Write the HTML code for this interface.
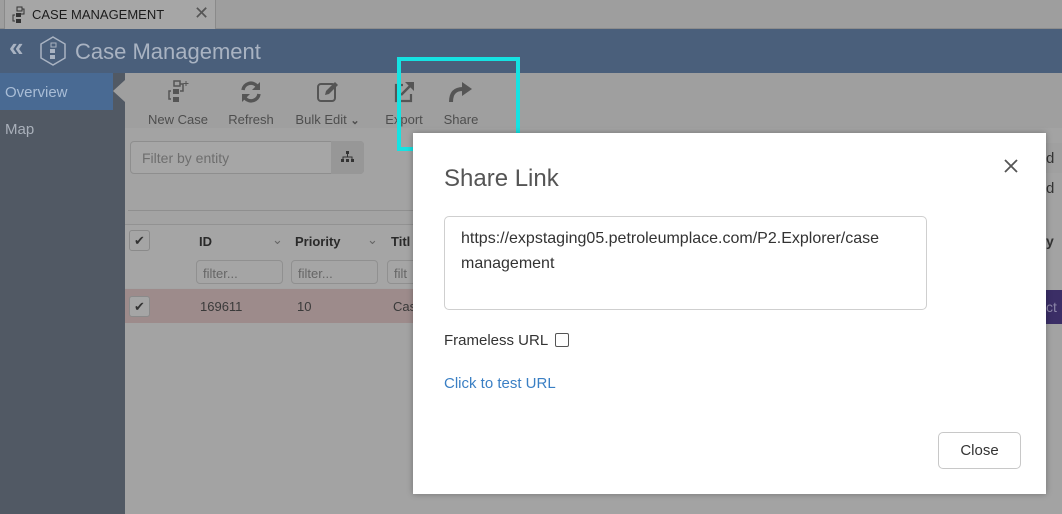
<!DOCTYPE html>
<html><head><meta charset="utf-8"><style>
*{box-sizing:border-box;margin:0;padding:0}
body{width:1062px;height:514px;overflow:hidden;position:relative;font-family:"Liberation Sans",sans-serif;background:#a4a4a4}
.abs{position:absolute}
.tabbar{left:0;top:0;width:1062px;height:29px;background:#9e9e9e;border-bottom:1px solid #8c8c8c}
.tab{left:4px;top:0;width:212px;height:29px;background:#a6a6a6;border-left:1px solid #8a8a8a;border-right:1px solid #8a8a8a;font-size:13px;color:#1c1c1c}
.header{left:0;top:29px;width:1062px;height:44px;background:#4a5f7b;color:#a9b3c2;font-size:22px}
.side{left:0;top:73px;width:125px;height:441px;background:#515964}
.ov{left:0;top:73px;width:113px;height:37px;background:#496a93;color:#a9bdd6;font-size:15px;padding:11px 0 0 5px}
.map{left:5px;top:121px;color:#a9b0ba;font-size:15px}
.tool{top:80px;color:#4e4e4e;font-size:13px;text-align:center}
.tool svg{display:block;margin:0 auto 8px}
.content{left:125px;top:128px;width:937px;height:386px;background:#a3a3a3}
.tb{left:125px;top:73px;width:937px;height:55px;background:#9f9f9f}
.grid{font-size:13px;color:#2a2a2a}
.modal{left:413px;top:133px;width:633px;height:361px;background:#fff;box-shadow:0 0 6px rgba(0,0,0,.3)}
</style></head><body>
<div class="abs tabbar"></div>
<div class="abs tab"><svg class="abs" style="left:7px;top:6px" width="14" height="18" viewBox="0 0 14 18"><rect x="5" y="1" width="5" height="4" fill="none" stroke="#333"/><rect x="4" y="7" width="5" height="4" fill="#333"/><rect x="4" y="13" width="5" height="4" fill="#333"/><path d="M3 9H1v6h2M10 3h2v5h-3" fill="none" stroke="#333"/></svg><span class="abs" style="left:27px;top:7px">CASE MANAGEMENT</span><span class="abs" style="left:189px;top:3px;font-size:18px;color:#555">✕</span></div>
<div class="abs header"><span class="abs" style="left:9px;top:3px;font-size:26px;font-weight:bold">«</span>
<svg class="abs" style="left:38px;top:6px" width="30" height="32" viewBox="0 0 30 32"><path d="M15 2L27 9V23L15 30L3 23V9Z" fill="none" stroke="#a9b3c2" stroke-width="1.5"/><rect x="13" y="8" width="5" height="4" fill="none" stroke="#a9b3c2"/><rect x="12" y="14" width="5" height="4" fill="#a9b3c2"/><rect x="12" y="20" width="5" height="4" fill="#a9b3c2"/></svg>
<span class="abs" style="left:75px;top:10px">Case Management</span></div>
<div class="abs side"></div>
<div class="abs ov">Overview</div>
<div class="abs" style="left:113px;top:80px;width:0;height:0;border-top:11px solid transparent;border-bottom:11px solid transparent;border-right:12px solid #9f9f9f"></div>
<div class="abs map">Map</div>
<div class="abs tb"></div>
<div class="abs content"></div>
<div class="abs tool" style="left:147px;width:62px"><svg width="24" height="24" viewBox="0 0 24 24"><rect x="8" y="1" width="6" height="5" fill="none" stroke="#555" stroke-width="1.5"/><rect x="7" y="9" width="6" height="5" fill="#555"/><rect x="7" y="17" width="6" height="5" fill="#555"/><path d="M5 11H3v8h2M14 4h3v7h-3" fill="none" stroke="#555" stroke-width="1.5"/><path d="M20 1v5M17.5 3.5h5" stroke="#555"/></svg>New Case</div>
<div class="abs tool" style="left:226px;width:50px"><svg width="24" height="24" viewBox="0 0 24 24"><path d="M4 10A8 8 0 0 1 18 6" fill="none" stroke="#555" stroke-width="3.5"/><path d="M21 2v8h-8z" fill="#555"/><path d="M20 14A8 8 0 0 1 6 18" fill="none" stroke="#555" stroke-width="3.5"/><path d="M3 22v-8h8z" fill="#555"/></svg>Refresh</div>
<div class="abs tool" style="left:290px;width:75px"><svg width="24" height="24" viewBox="0 0 24 24"><rect x="2" y="4" width="17" height="17" rx="3" fill="none" stroke="#555" stroke-width="2"/><path d="M9 15l1-4 9-9 3 3-9 9z" fill="#555"/></svg>Bulk Edit <b style="font-size:11px">&#8964;</b></div>
<div class="abs tool" style="left:383px;width:42px"><svg width="24" height="24" viewBox="0 0 24 24"><path d="M11 5H4v16h15v-7" fill="none" stroke="#555" stroke-width="2.2"/><path d="M9 15L19 5" stroke="#555" stroke-width="2.5"/><path d="M13 2h9v9z" fill="#555"/></svg>Export</div>
<div class="abs tool" style="left:442px;width:38px"><svg width="26" height="24" viewBox="0 0 26 24"><path d="M3 22C3 12 8 9 15 9" fill="none" stroke="#555" stroke-width="4"/><path d="M14 2l10 7-10 7z" fill="#555"/></svg>Share</div>
<div class="abs" style="left:130px;top:141px;width:234px;height:33px;border:1px solid #8e8e8e;border-radius:4px;background:#a6a6a6"></div>
<div class="abs" style="left:331px;top:141px;width:33px;height:33px;background:#979797;border-radius:0 4px 4px 0"><svg class="abs" style="left:10px;top:10px" width="13" height="12" viewBox="0 0 13 12"><rect x="5" y="0" width="3" height="3" fill="#333"/><path d="M6.5 3v3M2 9V6h9v3" fill="none" stroke="#333"/><rect x="0" y="8" width="3" height="3" fill="#333"/><rect x="5" y="8" width="3" height="3" fill="#333"/><rect x="10" y="8" width="3" height="3" fill="#333"/></svg></div>
<div class="abs" style="left:142px;top:150px;font-size:14px;color:#6e6e6e">Filter by entity</div>
<div class="abs" style="left:128px;top:210px;width:290px;height:1px;background:#8f8f8f"></div>
<div class="abs" style="left:125px;top:224px;width:290px;height:64px;background:#a5a5a5;border-top:1px solid #929292"></div>
<div class="abs" style="left:125px;top:289px;width:290px;height:34px;background:#9d8b8b"></div>
<div class="abs" style="left:129px;top:230px;width:21px;height:21px;border:1px solid #8a8a8a;border-radius:3px;text-align:center;font-size:13px;color:#333;line-height:19px">✔</div>
<div class="abs" style="left:129px;top:296px;width:21px;height:21px;border:1px solid #8a8a8a;border-radius:3px;background:#a5a5a5;text-align:center;font-size:13px;color:#333;line-height:19px">✔</div>
<div class="abs grid" style="left:199px;top:234px;font-weight:bold">ID</div>
<div class="abs grid" style="left:272px;top:232px;color:#666">⌄</div>
<div class="abs grid" style="left:295px;top:234px;font-weight:bold">Priority</div>
<div class="abs grid" style="left:367px;top:232px;color:#666">⌄</div>
<div class="abs grid" style="left:391px;top:234px;font-weight:bold">Titl</div>
<div class="abs" style="left:196px;top:260px;width:87px;height:24px;border:1px solid #909090;border-radius:4px;font-size:13px;color:#666;padding:5px 6px">filter...</div>
<div class="abs" style="left:291px;top:260px;width:87px;height:24px;border:1px solid #909090;border-radius:4px;font-size:13px;color:#666;padding:5px 6px">filter...</div>
<div class="abs" style="left:387px;top:260px;width:40px;height:24px;border:1px solid #909090;border-radius:4px;font-size:13px;color:#666;padding:5px 6px">filt</div>
<div class="abs grid" style="left:200px;top:299px;color:#3a3a3a">169611</div>
<div class="abs grid" style="left:297px;top:299px;color:#3a3a3a">10</div>
<div class="abs grid" style="left:393px;top:299px;color:#3a3a3a">Cas</div>
<div class="abs" style="left:1046px;top:143px;width:16px;height:30px;background:#a0a0a0;font-size:15px;color:#333;padding-top:7px">d</div>
<div class="abs" style="left:1046px;top:180px;font-size:15px;color:#333">d</div>
<div class="abs" style="left:1046px;top:233px;font-size:14px;color:#333;font-weight:bold">y</div>
<div class="abs" style="left:1046px;top:290px;width:16px;height:34px;background:#3b2e66;color:#8c86a8;font-size:14px;padding-top:9px">ct</div>
<div class="abs" style="left:397px;top:57px;width:123px;height:94px;border:4px solid #16e2e2"></div>
<div class="abs modal">
<div class="abs" style="left:31px;top:32px;font-size:24px;color:#555">Share Link</div>
<svg class="abs" style="left:591px;top:26px" width="14" height="14" viewBox="0 0 14 14"><path d="M1 1L13 13M13 1L1 13" stroke="#555" stroke-width="1.8"/></svg>
<div class="abs" style="left:31px;top:83px;width:483px;height:94px;border:1px solid #cfcfcf;border-radius:5px;padding:9px 16px;font-size:16px;line-height:25px;color:#333">https://expstaging05.petroleumplace.com/P2.Explorer/case management</div>
<div class="abs" style="left:31px;top:199px;font-size:15px;color:#333">Frameless URL</div>
<div class="abs" style="left:142px;top:200px;width:14px;height:14px;border:1px solid #555;border-radius:2px"></div>
<div class="abs" style="left:31px;top:242px;font-size:15px;color:#3a7fc4">Click to test URL</div>
<div class="abs" style="left:525px;top:299px;width:83px;height:37px;border:1px solid #c8c8c8;border-radius:5px;font-size:15px;color:#333;text-align:center;line-height:35px">Close</div>
</div>
</body></html>
